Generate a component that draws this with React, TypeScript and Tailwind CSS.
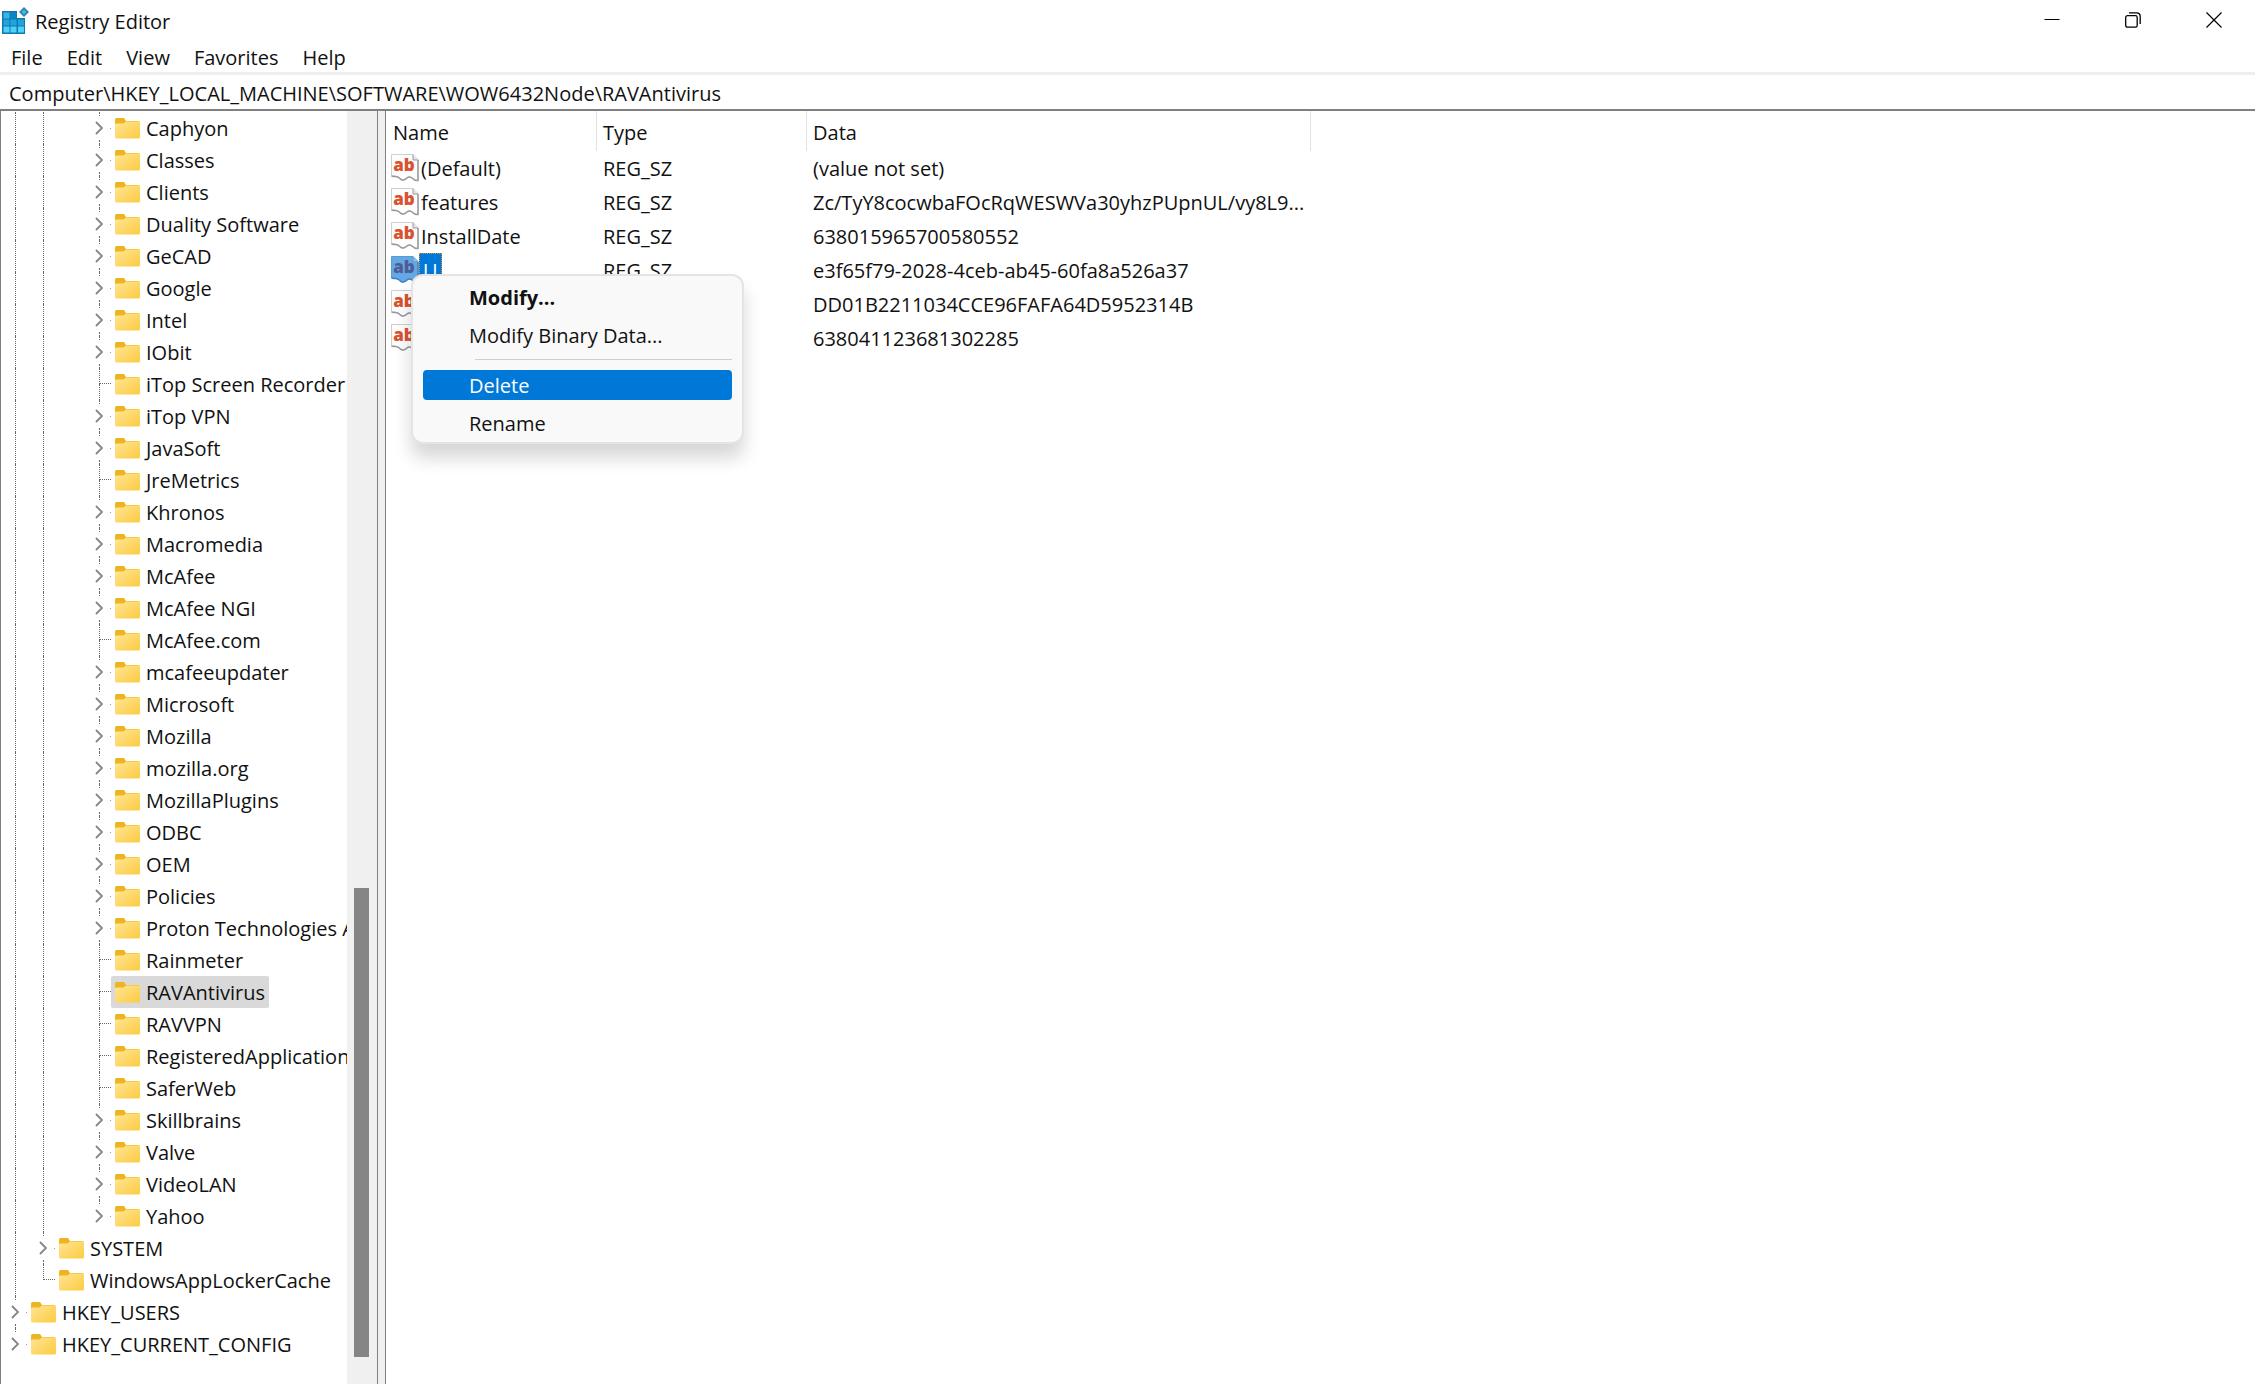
import React from "react";

type Node = { name: string; level: 1 | 2 | 4; leaf?: boolean; last?: boolean; selected?: boolean };

const n = (name: string, leaf = false): Node => ({ name, level: 4, leaf });

const nodes: Node[] = [
  n("Caphyon"),
  n("Classes"),
  n("Clients"),
  n("Duality Software"),
  n("GeCAD"),
  n("Google"),
  n("Intel"),
  n("IObit"),
  n("iTop Screen Recorder", true),
  n("iTop VPN"),
  n("JavaSoft"),
  n("JreMetrics", true),
  n("Khronos"),
  n("Macromedia"),
  n("McAfee"),
  n("McAfee NGI"),
  n("McAfee.com", true),
  n("mcafeeupdater"),
  n("Microsoft"),
  n("Mozilla"),
  n("mozilla.org"),
  n("MozillaPlugins"),
  n("ODBC"),
  n("OEM"),
  n("Policies"),
  n("Proton Technologies AG"),
  n("Rainmeter", true),
  { name: "RAVAntivirus", level: 4, leaf: true, selected: true },
  n("RAVVPN", true),
  n("RegisteredApplications", true),
  n("SaferWeb", true),
  n("Skillbrains"),
  n("Valve"),
  n("VideoLAN"),
  { name: "Yahoo", level: 4, last: true },
  { name: "SYSTEM", level: 2 },
  { name: "WindowsAppLockerCache", level: 2, leaf: true, last: true },
  { name: "HKEY_USERS", level: 1 },
  { name: "HKEY_CURRENT_CONFIG", level: 1, last: true },
];

const values = [
  { name: "(Default)", data: "(value not set)" },
  { name: "features", data: "Zc/TyY8cocwbaFOcRqWESWVa30yhzPUpnUL/vy8L9..." },
  { name: "InstallDate", data: "638015965700580552" },
  { name: "U", data: "e3f65f79-2028-4ceb-ab45-60fa8a526a37", selected: true },
  { name: "", data: "DD01B2211034CCE96FAFA64D5952314B" },
  { name: "", data: "638041123681302285" },
];

function RegistryIcon() {
  return (
    <svg width="28" height="28" viewBox="0 0 28 28" aria-hidden="true">
      <path d="M0 4h15v7h8v16H0z" fill="#0f78ae" />
      <path d="M1.5 12.5h6v6h-6zM8.500 12.500h6v6h-6zM16 12.500h6v6h-6z" fill="#1fa5dc" />
      <path d="M1.5 5.500h6v6h-6z" fill="#35b6ea" />
      <path d="M8.500 5.500h6v6h-6z" fill="#0b86c4" />
      <path d="M1.500 19.500h6v6h-6zM8.500 19.500h6v6h-6zM16 19.500h6v6h-6z" fill="#4fd0fb" />
      <path d="M22 0l5 5-5 5-5-5z" fill="#2b86ad" />
      <path d="M22 2.500l2.500 2.500-2.500 2.500-2.500-2.500z" fill="#4fb4dc" />
    </svg>
  );
}

function FolderIcon() {
  return (
    <svg className="shrink-0" width="25" height="21" viewBox="0 0 25 21" aria-hidden="true">
      <defs>
        <linearGradient id="folder" x1="0" y1="0" x2="1" y2="1">
          <stop offset="0" stopColor="#ffe596" />
          <stop offset="1" stopColor="#fccb40" />
        </linearGradient>
      </defs>
      <path d="M0 1.500Q0 0 1.500 0H9l2 3h13v4H0z" fill="#eeb422" />
      <path d="M0 6.500Q0 5.500 1 5.500h7.500L11 3.500h13q1 0 1 1V19q0 1.500-1.500 1.500h-22Q0 20.500 0 19z" fill="url(#folder)" />
    </svg>
  );
}

function StringIcon({ selected = false }: { selected?: boolean }) {
  return (
    <svg className="shrink-0" width="28" height="28" viewBox="0 0 28 28" aria-hidden="true">
      <path
        d="M.5.5H22L27 5.500V26.500q-3 .5-6-2.500-3-2-5 0-3 3-6 1.500-3-3-5-3-2.500 0-4.500-.5z"
        fill={selected ? "#63a9e3" : "#fdfdfd"}
        stroke={selected ? "#5b9bd3" : "#cfcfcf"}
      />
      <path
        d="M.5 22q2 .5 4.500.5 2 0 5 3 3 1.500 6-1.500 2-2 5 0 3 3 6 2.500V6"
        fill="none"
        stroke={selected ? "#3f86c4" : "#9a9a9a"}
        strokeWidth="1.500"
      />
      <path d="M22 .5V6h5" fill={selected ? "#8cc0ea" : "#e4e4e4"} stroke={selected ? "#5b9bd3" : "#9a9a9a"} />
      <text
        x="13"
        y="17"
        textAnchor="middle"
        fontFamily="Open Sans"
        fontWeight="800"
        fontSize="17"
        fill={selected ? "#4f5c96" : "#d9532f"}
      >
        ab
      </text>
    </svg>
  );
}

const line = "border-dotted border-[#666]";

function Guide() {
  return (
    <span className="flex w-7 shrink-0 pl-[14px]">
      <span className={`border-l ${line}`} />
    </span>
  );
}

function Branch({ leaf, last }: { leaf?: boolean; last?: boolean }) {
  if (leaf) {
    return (
      <span className="flex w-[26px] shrink-0 flex-col pl-[14px]">
        <span className={`h-4 border-b border-l ${line}`} />
        {!last && <span className={`h-4 border-l ${line}`} />}
      </span>
    );
  }
  return (
    <span className="flex w-[26px] shrink-0 flex-col pl-[10px]">
      <span className={`ml-1 h-1 border-l ${line}`} />
      <button className="flex h-6 items-center justify-between" aria-label="Expand">
        <svg width="8" height="14" viewBox="0 0 8 14" fill="none" stroke="#858585" strokeWidth="1.800" aria-hidden="true">
          <path d="M1 1l6 6-6 6" />
        </svg>
        <span className="size-px bg-[#999]" />
      </button>
      {!last && <span className={`ml-1 h-1 border-l ${line}`} />}
    </span>
  );
}

function TreeRow({ node }: { node: Node }) {
  return (
    <li className="flex h-8" role="treeitem" aria-selected={!!node.selected}>
      {node.level > 1 && <Guide />}
      {node.level > 2 && (
        <>
          <Guide />
          <span className="w-7 shrink-0" />
        </>
      )}
      <Branch leaf={node.leaf} last={node.last} />
      <button
        className={`flex items-center gap-[6px] rounded-xs pr-1 pl-1 whitespace-nowrap ${node.selected ? "bg-[#d9d9d9]" : ""}`}
      >
        <FolderIcon />
        <span className="pt-0.5">{node.name}</span>
      </button>
    </li>
  );
}

function ContextMenu() {
  const item = "flex h-[30px] items-center rounded-sm pt-0.5 pl-[46px] text-left";
  return (
    <div
      role="menu"
      className="absolute top-[163px] left-[25px] flex w-[333px] flex-col rounded-xl border-2 border-[#e4e4e4] bg-[#f9f9f9] px-[10px] pt-[6px] pb-1 shadow-[0_14px_18px_rgba(0,0,0,0.16)]"
    >
      <button role="menuitem" className={`${item} font-bold`}>Modify...</button>
      <button role="menuitem" className={`${item} mt-2`}>Modify Binary Data...</button>
      <hr className="mt-[9px] mb-[10px] ml-[52px] border-[#cfcfcf]" />
      <button role="menuitem" className={`${item} bg-[#0078d7] text-white`}>Delete</button>
      <button role="menuitem" className={`${item} mt-2`}>Rename</button>
    </div>
  );
}

export default function App() {
  return (
    <div className="flex h-screen flex-col overflow-hidden bg-white font-['Open_Sans',sans-serif] text-[20px] leading-6 text-[#111]">
      <header className="flex h-[42px] items-start justify-between pl-[2px]">
        <div className="flex h-full items-center gap-[5px]">
          <RegistryIcon />
          <h1 className="pt-0.5">Registry Editor</h1>
        </div>
        <div className="flex h-10 items-center pr-px text-black">
          <button className="flex h-full w-[81px] items-center justify-center" aria-label="Minimize">
            <svg width="16" height="16" viewBox="0 0 16 16" stroke="currentColor" aria-hidden="true">
              <path d="M.5 7.500h15" />
            </svg>
          </button>
          <button className="flex h-full w-[81px] items-center justify-center" aria-label="Restore">
            <svg width="16" height="16" viewBox="0 0 16 16" fill="none" stroke="currentColor" strokeWidth="1.300" aria-hidden="true">
              <rect x=".7" y="3.700" width="11.500" height="11.500" rx="1.800" />
              <path d="M4 .8h7.500Q15.200.8 15.200 4.500V12" />
            </svg>
          </button>
          <button className="flex h-full w-[81px] items-center justify-center" aria-label="Close">
            <svg width="16" height="16" viewBox="0 0 16 16" stroke="currentColor" strokeWidth="1.200" aria-hidden="true">
              <path d="M.5.5l15 15M15.500.5l-15 15" />
            </svg>
          </button>
        </div>
      </header>
      <nav className="flex h-[30px] items-center gap-6 px-[11px] pt-0.5">
        <button>File</button>
        <button>Edit</button>
        <button>View</button>
        <button>Favorites</button>
        <button>Help</button>
      </nav>
      <input
        aria-label="Address"
        className="h-[39px] w-full border-t-[3px] border-b-2 border-t-[#eee] border-b-[#808080] px-[9px] pt-0.5 outline-none"
        defaultValue="Computer\HKEY_LOCAL_MACHINE\SOFTWARE\WOW6432Node\RAVAntivirus"
      />
      <main className="flex min-h-0 flex-1">
        <aside className="flex w-[378px] shrink-0 border-x border-[#808080]">
          <ul role="tree" className="min-w-0 flex-1 overflow-hidden pt-px">
            {nodes.map((node) => (
              <TreeRow key={node.name} node={node} />
            ))}
          </ul>
          <div className="flex w-[30px] shrink-0 flex-col bg-[#f0f0f0] pr-2 pl-[7px]" aria-hidden="true">
            <div className="flex-[777]" />
            <div className="flex-[469] bg-[#858585]" />
            <div className="flex-[27]" />
          </div>
        </aside>
        <div className="w-[7px] shrink-0 bg-[#f0f0f0]" />
        <section className="relative flex-1 border-l border-[#808080]">
          <table className="w-[925px] table-fixed border-separate border-spacing-0 text-left">
            <colgroup>
              <col className="w-[211px]" />
              <col className="w-[210px]" />
              <col className="w-[504px]" />
            </colgroup>
            <thead>
              <tr className="h-10">
                <th className="border-r border-[#e2e2e2] p-0 pt-[3px] pl-[7px] font-normal">Name</th>
                <th className="border-r border-[#e2e2e2] p-0 pt-[3px] pl-[6px] font-normal">Type</th>
                <th className="border-r border-[#e2e2e2] p-0 pt-[3px] pl-[6px] font-normal">Data</th>
              </tr>
            </thead>
            <tbody>
              {values.map((v) => (
                <tr key={v.data} className="h-[34px]">
                  <td className="p-0 pl-[5px]">
                    <div className="flex h-[34px] items-center">
                      <StringIcon selected={v.selected} />
                      <span
                        className={
                          v.selected
                            ? "flex h-[34px] items-center border border-dotted border-[#e08a3c] bg-[#0078d7] px-[3px] pt-0.5 text-white"
                            : "pt-0.5 pl-[2px]"
                        }
                      >
                        {v.name}
                      </span>
                    </div>
                  </td>
                  <td className="p-0 pt-0.5 pl-[6px]">REG_SZ</td>
                  <td className="p-0 pt-0.5 pl-[6px] whitespace-nowrap">{v.data}</td>
                </tr>
              ))}
            </tbody>
          </table>
          <ContextMenu />
        </section>
      </main>
    </div>
  );
}
